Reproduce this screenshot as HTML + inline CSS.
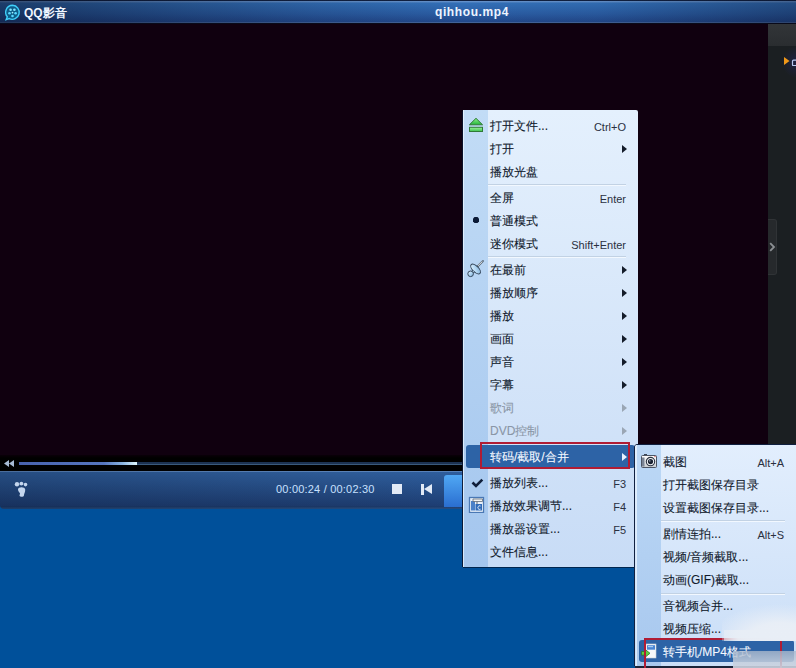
<!DOCTYPE html>
<html><head><meta charset="utf-8">
<style>
*{margin:0;padding:0;box-sizing:border-box}
html,body{width:796px;height:668px;overflow:hidden;background:#00509a;font-family:"Liberation Sans",sans-serif}
.abs{position:absolute}
#title{left:0;top:0;width:796px;height:24px;background:linear-gradient(180deg,#102040 0px,#102040 1px,#6a98d0 1px,#5a88c4 2px,#3370b8 3px,#2a5ca2 14px,#22488a 22px,#3a5a90 22px,#4a6aa0 23px,#0a0a18 23px,#0a0a18 24px)}
#title .shade{left:0;top:0;width:796px;height:24px;background:linear-gradient(90deg,rgba(5,10,30,.5) 0%,rgba(5,10,30,.12) 40%,rgba(5,10,30,0) 58%,rgba(5,10,30,.05) 75%,rgba(5,10,30,.35) 100%)}
#video{left:0;top:24px;width:768px;height:432px;background:#10000f}
#rpanel{left:768px;top:24px;width:28px;height:432px;background:#1b1f22}
#rtop{left:768px;top:24px;width:28px;height:22px;background:linear-gradient(180deg,#323538,#2a2d30)}
#pbar{left:0;top:455px;width:768px;height:16px;background:linear-gradient(180deg,#0a0008 0px,#000 3px,#000 16px)}
#ctrl{left:0;top:471px;width:768px;height:38px;background:linear-gradient(90deg,rgba(0,10,30,.18) 0%,rgba(0,10,30,0) 45%,rgba(50,120,230,.18) 85%,rgba(50,120,230,.22) 100%),linear-gradient(180deg,#5a82b6 0px,#5a82b6 1px,#2e5c98 1px,#1c3a6c 35px,#1a3560 36px,#2a4a78 37px,#1a4478 38px);border-radius:0 0 0 4px}
.txt{white-space:nowrap}
#menu{left:463px;top:110px;width:175px;height:457px;background:linear-gradient(180deg,#e4f0fd 0%,#c8dcf6 100%);border-radius:2px 2px 0 0;box-shadow:-1px 0 0 rgba(10,20,45,.9), 0 1px 0 rgba(0,10,30,.6)}
#menu .icol{left:0;top:0;width:25px;height:457px;background:linear-gradient(180deg,#c2dcf6 0%,#a4c6ee 100%);border-left:1px solid rgba(240,248,255,.7)}
.mi{position:absolute;left:27px;font-size:12px;color:#111a2c;-webkit-text-stroke:0.1px currentColor;line-height:12px;white-space:nowrap}
.sc{position:absolute;font-size:11px;color:#2a3040;line-height:12px;white-space:nowrap;text-align:right}
.dis{color:#8a96a6}
.hlt{color:#f4f8ff}
.arr.arrd{border-left-color:#9aa6b4}
.arr.arrh{border-left-color:#e8f2ff}
.sep{position:absolute;height:2px;border-top:1px solid #c2d2e4;border-bottom:1px solid #f2f8ff}
.arr{position:absolute;width:0;height:0;border-top:4px solid transparent;border-bottom:4px solid transparent;border-left:5px solid #141c2a}
.hl{position:absolute;background:#2d63a6;border-radius:3px}
.red{position:absolute;border:2px solid #b01c34}
#sub{left:635px;top:445px;width:162px;height:221px;background:linear-gradient(180deg,#e2eefd 0%,#cadef7 100%);border-radius:2px 0 0 0;box-shadow:-1px 0 0 #102040, 0 -1px 0 #102040, 0 2px 0 #1a2438}
#sub .icol{left:1px;top:0;width:25px;height:221px;background:linear-gradient(180deg,#bcd8f6 0%,#a8c8ee 100%);border-left:1px solid rgba(240,248,255,.7)}
</style></head><body>
<div id="title" class="abs"><div class="shade abs"></div>
  <svg class="abs" style="left:3px;top:3px" width="19" height="19" viewBox="0 0 19 19">
    <path d="M9.5 2.3 A7 7 0 1 1 6.2 15.6 L3.2 16.6 L4.3 13.8 A7 7 0 0 1 9.5 2.3 Z" fill="#0e5c88" stroke="#3fd0fa" stroke-width="1.4"/>
    <circle cx="7.6" cy="6.8" r="1.3" fill="#7fe6ff"/><circle cx="11.4" cy="6.8" r="1.3" fill="#7fe6ff"/>
    <circle cx="6.5" cy="10.3" r="1.3" fill="#5ad8ff"/><circle cx="12.6" cy="10.3" r="1.3" fill="#5ad8ff"/>
    <circle cx="9.5" cy="13" r="1.3" fill="#5ad8ff"/><circle cx="9.5" cy="9.6" r="0.9" fill="#9ff0ff"/>
  </svg>
  <div class="abs txt" style="left:24px;top:5px;font-size:12px;font-weight:bold;color:#f0f6ff">QQ影音</div>
  <div class="abs txt" style="left:435px;top:5px;font-size:12px;font-weight:bold;color:#eef4ff;letter-spacing:0.6px">qihhou.mp4</div>
</div>
<div id="video" class="abs"></div>
<div id="rpanel" class="abs"></div>
<div id="rtop" class="abs"></div>
<div id="pbar" class="abs">
  <div class="abs" style="left:19px;top:7px;width:749px;height:3px;background:#1c3252;border-bottom:1px solid #3a5a7c"></div>
  <div class="abs" style="left:19px;top:7px;width:118px;height:3px;background:linear-gradient(90deg,#4862ae 0%,#5676c0 72%,#8ab4e0 88%,#e0f8ff 100%)"></div>
</div>
<div id="ctrl" class="abs">
  <div class="abs txt" style="left:276px;top:12px;font-size:11px;color:#c8e0ff;letter-spacing:0.2px">00:00:24 / 00:02:30</div>
  <div class="abs" style="left:392px;top:13px;width:10px;height:10px;background:#e2eaf6"></div>
  <div class="abs" style="left:421px;top:13px;width:3px;height:11px;background:#e2eaf6"></div>
  <div class="abs" style="left:424px;top:13px;width:0;height:0;border-top:5.5px solid transparent;border-bottom:5.5px solid transparent;border-right:8px solid #e2eaf6"></div>
  <div class="abs" style="left:444px;top:4px;width:30px;height:32px;border-radius:3px 0 0 0;background:linear-gradient(180deg,#50a8f4,#2a6ed0)"></div>
</div>

<div id="menu" class="abs">
  <div class="icol abs"></div>
  <div class="hl" style="left:3px;top:335px;width:169px;height:23px"></div>
<div class="mi" style="left:27px;top:10px">打开文件...</div>
<div class="sc" style="left:43px;top:11px;width:120px">Ctrl+O</div>
<div class="mi" style="left:27px;top:33px">打开</div>
<div class="arr" style="left:159px;top:35px"></div>
<div class="mi" style="left:27px;top:56px">播放光盘</div>
<div class="mi" style="left:27px;top:82px">全屏</div>
<div class="sc" style="left:43px;top:83px;width:120px">Enter</div>
<div class="mi" style="left:27px;top:105px">普通模式</div>
<div class="mi" style="left:27px;top:128px">迷你模式</div>
<div class="sc" style="left:43px;top:129px;width:120px">Shift+Enter</div>
<div class="mi" style="left:27px;top:154px">在最前</div>
<div class="arr" style="left:159px;top:156px"></div>
<div class="mi" style="left:27px;top:177px">播放顺序</div>
<div class="arr" style="left:159px;top:179px"></div>
<div class="mi" style="left:27px;top:200px">播放</div>
<div class="arr" style="left:159px;top:202px"></div>
<div class="mi" style="left:27px;top:223px">画面</div>
<div class="arr" style="left:159px;top:225px"></div>
<div class="mi" style="left:27px;top:246px">声音</div>
<div class="arr" style="left:159px;top:248px"></div>
<div class="mi" style="left:27px;top:269px">字幕</div>
<div class="arr" style="left:159px;top:271px"></div>
<div class="mi dis" style="left:27px;top:292px">歌词</div>
<div class="arr arrd" style="left:159px;top:294px"></div>
<div class="mi dis" style="left:27px;top:315px">DVD控制</div>
<div class="arr arrd" style="left:159px;top:317px"></div>
<div class="mi hlt" style="left:27px;top:341px">转码/截取/合并</div>
<div class="arr arrh" style="left:159px;top:343px"></div>
<div class="mi" style="left:27px;top:367px">播放列表...</div>
<div class="sc" style="left:43px;top:368px;width:120px">F3</div>
<div class="mi" style="left:27px;top:390px">播放效果调节...</div>
<div class="sc" style="left:43px;top:391px;width:120px">F4</div>
<div class="mi" style="left:27px;top:413px">播放器设置...</div>
<div class="sc" style="left:43px;top:414px;width:120px">F5</div>
<div class="mi" style="left:27px;top:436px">文件信息...</div>
<div class="sep" style="left:25px;width:138px;top:74px"></div>
<div class="sep" style="left:25px;width:138px;top:146px"></div>
</div>
<div id="sub" class="abs">
  <div class="icol abs"></div>
  <div class="hl" style="left:4px;top:195px;width:155px;height:22px"></div>
<div class="mi" style="left:28px;top:11px">截图</div>
<div class="sc" style="left:29px;top:12px;width:120px">Alt+A</div>
<div class="mi" style="left:28px;top:34px">打开截图保存目录</div>
<div class="mi" style="left:28px;top:57px">设置截图保存目录...</div>
<div class="mi" style="left:28px;top:83px">剧情连拍...</div>
<div class="sc" style="left:29px;top:84px;width:120px">Alt+S</div>
<div class="mi" style="left:28px;top:106px">视频/音频截取...</div>
<div class="mi" style="left:28px;top:129px">动画(GIF)截取...</div>
<div class="mi" style="left:28px;top:155px">音视频合并...</div>
<div class="mi" style="left:28px;top:178px">视频压缩...</div>
<div class="mi hlt" style="left:28px;top:201px">转手机/MP4格式</div>
<div class="sep" style="left:26px;width:124px;top:75px"></div>
<div class="sep" style="left:26px;width:124px;top:148px"></div>
</div>


<!-- main menu icons -->
<svg class="abs" style="left:468px;top:117px" width="16" height="16" viewBox="0 0 16 16">
  <defs><linearGradient id="eg" x1="0" y1="0" x2="0" y2="1"><stop offset="0" stop-color="#8ef08a"/><stop offset="1" stop-color="#22b43a"/></linearGradient>
  <linearGradient id="eg2" x1="0" y1="0" x2="0" y2="1"><stop offset="0" stop-color="#9ef39a"/><stop offset="1" stop-color="#3cc050"/></linearGradient></defs>
  <path d="M8 1.3 L14.6 7.8 L1.4 7.8 Z" fill="url(#eg)" stroke="#2f7a36" stroke-width="1" stroke-linejoin="round"/>
  <rect x="1.5" y="10.3" width="13" height="4.2" fill="url(#eg2)" stroke="#2f7a36" stroke-width="1"/>
</svg>
<svg class="abs" style="left:472px;top:216px" width="8" height="8" viewBox="0 0 8 8">
  <path d="M2.5 1 H5.5 L7 2.5 V5.5 L5.5 7 H2.5 L1 5.5 V2.5 Z" fill="#0b1a36"/>
</svg>
<svg class="abs" style="left:466px;top:259px" width="19" height="19" viewBox="0 0 19 19">
  <defs><linearGradient id="pg" x1="0" y1="0" x2="1" y2="1"><stop offset="0" stop-color="#e4f4ff"/><stop offset="0.5" stop-color="#b4d8f4"/><stop offset="1" stop-color="#78a8d4"/></linearGradient></defs>
  <path d="M11.5 7.5 L17 2" stroke="#5a6a7a" stroke-width="1.8" stroke-linecap="round"/>
  <path d="M12 6.8 L16.4 2.5" stroke="#ffffff" stroke-width="0.8"/>
  <ellipse cx="9.6" cy="10" rx="3" ry="6.2" transform="rotate(-45 9.6 10)" fill="url(#pg)" stroke="#34465a" stroke-width="1"/>
  <path d="M7.6 12 L5.4 14.2" stroke="#34465a" stroke-width="3"/>
  <path d="M7.6 12 L5.4 14.2" stroke="#bfe0f6" stroke-width="1.2"/>
  <circle cx="4.6" cy="14.8" r="2.8" fill="url(#pg)" stroke="#34465a" stroke-width="1"/>
</svg>
<svg class="abs" style="left:471px;top:478px" width="13" height="11" viewBox="0 0 13 11">
  <path d="M1.5 4.5 L5 8 L11.3 1.7" fill="none" stroke="#0f1e3a" stroke-width="2.6"/>
</svg>
<svg class="abs" style="left:468px;top:496px" width="17" height="17" viewBox="0 0 17 17">
  <rect x="1.5" y="1.5" width="14" height="15" fill="#e8f0fa" stroke="#4a78b4" stroke-width="1.3"/>
  <rect x="3" y="5" width="4" height="9.5" fill="#4a80c8"/>
  <rect x="7.5" y="8" width="6.5" height="6.5" fill="#2f6ab8"/>
  <path d="M5 3 H14.5 V5.5 H5 Z" fill="#f4f4f4" stroke="#606a76" stroke-width="0.8"/>
  <path d="M9 5.5 V8" stroke="#606a76" stroke-width="1"/>
  <path d="M12.5 10 A1.8 1.8 0 1 0 12.5 13.2" fill="none" stroke="#f0f6ff" stroke-width="1"/>
</svg>
<!-- submenu icons -->
<svg class="abs" style="left:640px;top:453px" width="18" height="16" viewBox="0 0 18 16">
  <defs><linearGradient id="cg" x1="0" y1="0" x2="0" y2="1"><stop offset="0" stop-color="#ffffff"/><stop offset="1" stop-color="#c8ccd0"/></linearGradient></defs>
  <rect x="4" y="1" width="3" height="2" fill="#3a4454"/>
  <rect x="1.5" y="2.5" width="15" height="12" rx="1" fill="url(#cg)" stroke="#4c5564" stroke-width="1"/>
  <rect x="2" y="4.5" width="2.5" height="9" fill="#7a8494"/>
  <circle cx="10.5" cy="8.6" r="4.2" fill="#f4f6f8" stroke="#2a3240" stroke-width="1.1"/>
  <circle cx="10.5" cy="8.6" r="2.6" fill="#1a2230"/>
  <circle cx="9.8" cy="7.9" r="0.8" fill="#8a96a8"/>
  <circle cx="15" cy="3.6" r="0.7" fill="#c03030"/>
</svg>
<svg class="abs" style="left:640px;top:642px" width="18" height="18" viewBox="0 0 18 18">
  <rect x="6" y="2" width="10" height="14" fill="#f6f8fa" stroke="#c8d0d8" stroke-width="0.6"/>
  <rect x="7" y="3.2" width="8" height="4.5" fill="#4a86d4"/>
  <rect x="8" y="4" width="5" height="1.2" fill="#a8ccf4"/>
  <path d="M1.5 9.5 H5 V7.3 L10 11.3 L5 15.3 V13.1 H1.5 Z" fill="#5cd040" stroke="#2a7a2a" stroke-width="0.8"/>
</svg>
<!-- right panel -->
<div class="abs" style="left:782px;top:47px;width:14px;height:30px;background:radial-gradient(ellipse 14px 16px at 14px 15px,rgba(32,36,80,.75),rgba(32,36,80,0))"></div>
<svg class="abs" style="left:783px;top:56px" width="13" height="10" viewBox="0 0 13 10">
  <path d="M1 1 L6.5 5 L1 9 Z" fill="#f09818"/>
  <rect x="9.5" y="4.2" width="6" height="5.5" rx="1" fill="none" stroke="#b8c8f0" stroke-width="1.2"/>
</svg>
<div class="abs" style="left:768px;top:219px;width:9px;height:56px;background:#26292c;border:1px solid #303336;border-left:none;border-radius:0 3px 3px 0"></div>
<svg class="abs" style="left:768px;top:241px" width="9" height="12" viewBox="0 0 9 12">
  <path d="M2.2 2.2 L6 6 L2.2 9.8" fill="none" stroke="#8c9094" stroke-width="1.8"/>
</svg>
<!-- progress arrows -->
<svg class="abs" style="left:3px;top:459px" width="13" height="9" viewBox="0 0 13 9">
  <path d="M1 4.5 L6 1 V8 Z M6 4.5 L11 1 V8 Z" fill="#a8bcd6"/>
</svg>
<!-- footprint -->
<svg class="abs" style="left:13px;top:480px" width="15" height="18" viewBox="0 0 15 18">
  <circle cx="4" cy="4.2" r="2.2" fill="#c4d6ee"/><circle cx="8.4" cy="3.6" r="1.9" fill="#c4d6ee"/><circle cx="12.5" cy="4.6" r="1.8" fill="#c4d6ee"/>
  <path d="M5 9.2 C5 6.6 12 6.4 12.2 9.4 C12.4 12.2 11 13.5 11 15 C11 16.6 9.8 16.8 8.4 16.8 C6.6 16.8 6 15.6 7 14 C7.6 13 5 11.8 5 9.2 Z" fill="#c4d6ee"/>
</svg>
<div class="red" style="left:480px;top:442px;width:150px;height:27px"></div>
<div class="red" style="left:644px;top:638px;width:138px;height:40px"></div>
<div class="abs" style="left:722px;top:602px;width:74px;height:39px;background:radial-gradient(ellipse 70px 34px at 58px 36px, rgba(236,240,246,.95) 0%, rgba(236,240,246,.85) 45%, rgba(236,240,246,0) 100%)"></div>
<div class="abs" style="left:724px;top:630px;width:72px;height:11px;background:linear-gradient(90deg,rgba(232,238,246,.6),rgba(232,238,246,.95) 20%,rgba(232,238,246,.95))"></div>
<div class="abs" style="left:733px;top:651px;width:63px;height:17px;background:linear-gradient(180deg,rgba(170,184,204,.8),rgba(196,206,220,.85) 60%,rgba(205,212,224,.9))"></div>
</body></html>
